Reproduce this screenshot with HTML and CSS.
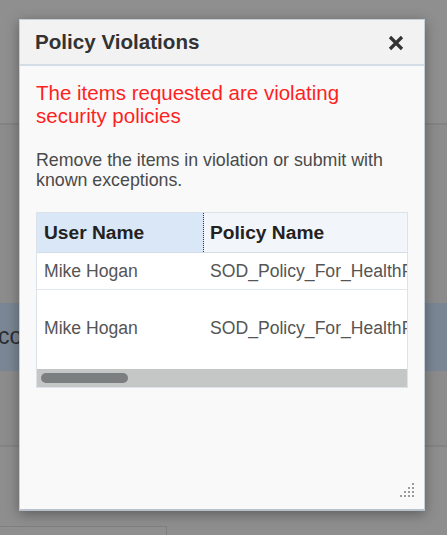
FILE: index.html
```html
<!DOCTYPE html>
<html lang="en">
<head>
<meta charset="utf-8">
<title>Policy Violations</title>
<link rel="stylesheet" href="styles.css">
</head>
<body>
<div class="page">
  <div class="bg-top"></div>
  <div class="bg-rule"></div>
  <div class="bg-gap1"></div>
  <div class="bg-band"><span class="bg-band-text">co</span></div>
  <div class="bg-gap2"></div>
  <div class="bg-rule"></div>
  <div class="bg-gap3"></div>
  <div class="bg-box"></div>
</div>

<div class="dialog" role="dialog" aria-labelledby="dlg-title">
  <div class="dialog-header">
    <h2 class="dialog-title" id="dlg-title">Policy Violations</h2>
    <button class="close-btn" aria-label="Close">
      <svg width="16" height="16" viewBox="0 0 16 16" aria-hidden="true">
        <path d="M2 2 L14 14 M14 2 L2 14" stroke="#333" stroke-width="3.2" fill="none"/>
      </svg>
    </button>
  </div>
  <div class="dialog-body">
    <p class="error-msg">The items requested are violating security policies</p>
    <p class="hint">Remove the items in violation or submit with known exceptions.</p>
    <div class="grid">
      <div class="grid-viewport">
        <div class="grid-inner">
          <div class="grid-head">
            <div class="cell col-user sorted">User Name</div>
            <div class="cell col-policy">Policy Name</div>
            <div class="cell col-desc">Description</div>
          </div>
          <div class="grid-row row-short">
            <div class="cell col-user">Mike Hogan</div>
            <div class="cell col-policy">SOD_Policy_For_HealthPlan</div>
            <div class="cell col-desc">Conflicting entitlements</div>
          </div>
          <div class="grid-row row-tall">
            <div class="cell col-user">Mike Hogan</div>
            <div class="cell col-policy">SOD_Policy_For_HealthPlan</div>
            <div class="cell col-desc">Conflicting entitlements</div>
          </div>
        </div>
      </div>
      <div class="hscroll"><div class="hscroll-thumb"></div></div>
    </div>
  </div>
  <div class="resize-grip" aria-hidden="true">
    <svg width="16" height="16" viewBox="0 0 16 16">
      <g fill="#9c9c9c">
        <rect x="12" y="1" width="2" height="2"/>
        <rect x="8" y="5" width="2" height="2"/><rect x="12" y="5" width="2" height="2"/>
        <rect x="4" y="9" width="2" height="2"/><rect x="8" y="9" width="2" height="2"/><rect x="12" y="9" width="2" height="2"/>
        <rect x="0" y="13" width="2" height="2"/><rect x="4" y="13" width="2" height="2"/><rect x="8" y="13" width="2" height="2"/><rect x="12" y="13" width="2" height="2"/>
      </g>
    </svg>
  </div>
</div>
</body>
</html>
```

FILE: styles.css
```css
* { box-sizing: border-box; }

html, body {
  margin: 0;
  padding: 0;
}

body {
  background: #8e8e8e;
  font-family: "Liberation Sans", Arial, sans-serif;
  width: 447px;
  height: 535px;
  overflow: hidden;
  position: relative;
}

/* dimmed page underneath the modal */
.page {
  display: flex;
  flex-direction: column;
}
.bg-top { height: 123px; background: #8f8f8f; }
.bg-rule { height: 2px; background: #838383; }
.bg-gap1 { height: 178px; background: #8c8c8c; }
.bg-band {
  height: 68px;
  background: #7b8694;
  display: flex;
  align-items: center;
}
.bg-band-text {
  font-size: 23px;
  color: #2a2f34;
  margin-left: -2px;
  padding-bottom: 2px;
}
.bg-gap2 { height: 74px; background: #8c8c8c; }
.bg-gap3 { height: 79px; background: #8e8e8e; }
.bg-box {
  width: 167px;
  height: 20px;
  border-top: 1px solid #7f7f7f;
  border-right: 1px solid #7f7f7f;
  background: #8f8f8f;
}

/* dialog */
.dialog {
  position: absolute;
  left: 19px;
  top: 19px;
  width: 406px;
  height: 492px;
  background: #f9f9f9;
  border: 1px solid #c6ced7;
  border-bottom: 2px solid #b9c2cc;
  box-shadow: 0 3px 12px rgba(0, 0, 0, 0.35);
  display: flex;
  flex-direction: column;
}

.dialog-header {
  height: 46px;
  flex: none;
  background: #f2f2f2;
  border-bottom: 2px solid #d4dce5;
  display: flex;
  align-items: center;
  justify-content: space-between;
  padding: 0 20px 0 15px;
}

.dialog-title {
  margin: 0;
  font-size: 20.6px;
  font-weight: bold;
  color: #333;
  line-height: 44px;
}

.close-btn {
  border: 0;
  background: transparent;
  padding: 0;
  width: 16px;
  height: 16px;
  display: flex;
  margin-top: 1px;
}

.dialog-body {
  padding: 15px 16px 0 16px;
  flex: 1;
}

.error-msg {
  margin: 0;
  font-size: 20.5px;
  line-height: 23px;
  color: #ff1f1f;
}

.hint {
  margin: 23px 0 0 0;
  font-size: 17.8px;
  line-height: 20px;
  color: #4a4a4a;
}

.grid {
  margin-top: 22px;
  width: 372px;
  border: 1px solid #dbe2ea;
  background: #fff;
}

.grid-viewport {
  overflow: hidden;
}

.grid-inner {
  width: 1440px;
}

.grid-head {
  display: flex;
  height: 40px;
  border-bottom: 1px solid #d3dde8;
  background: #f2f5f9;
}

.grid-head .cell {
  font-size: 19.2px;
  font-weight: bold;
  color: #222;
}

.grid-head .sorted {
  background: #d9e7f6;
  border-right: 1px dotted #333;
}

.grid-row {
  display: flex;
  background: #fff;
}
.row-short {
  height: 37px;
  border-bottom: 1px solid #e2e7ed;
}
.row-tall {
  height: 79px;
  padding-bottom: 3px;
}

.cell {
  display: flex;
  align-items: center;
  white-space: nowrap;
  font-size: 17.6px;
  color: #555;
}

.col-user { width: 167px; padding-left: 7px; }
.col-policy { width: 420px; padding-left: 6px; }
.col-desc { flex: 1; padding-left: 6px; }

.hscroll {
  height: 18px;
  background: #c5c6c6;
  padding: 4px 0 0 4px;
}
.hscroll-thumb {
  width: 87px;
  height: 10px;
  border-radius: 5px;
  background: #7b7f80;
}

.resize-grip {
  position: absolute;
  right: 8px;
  bottom: 11px;
  width: 16px;
  height: 16px;
  display: flex;
}
```
